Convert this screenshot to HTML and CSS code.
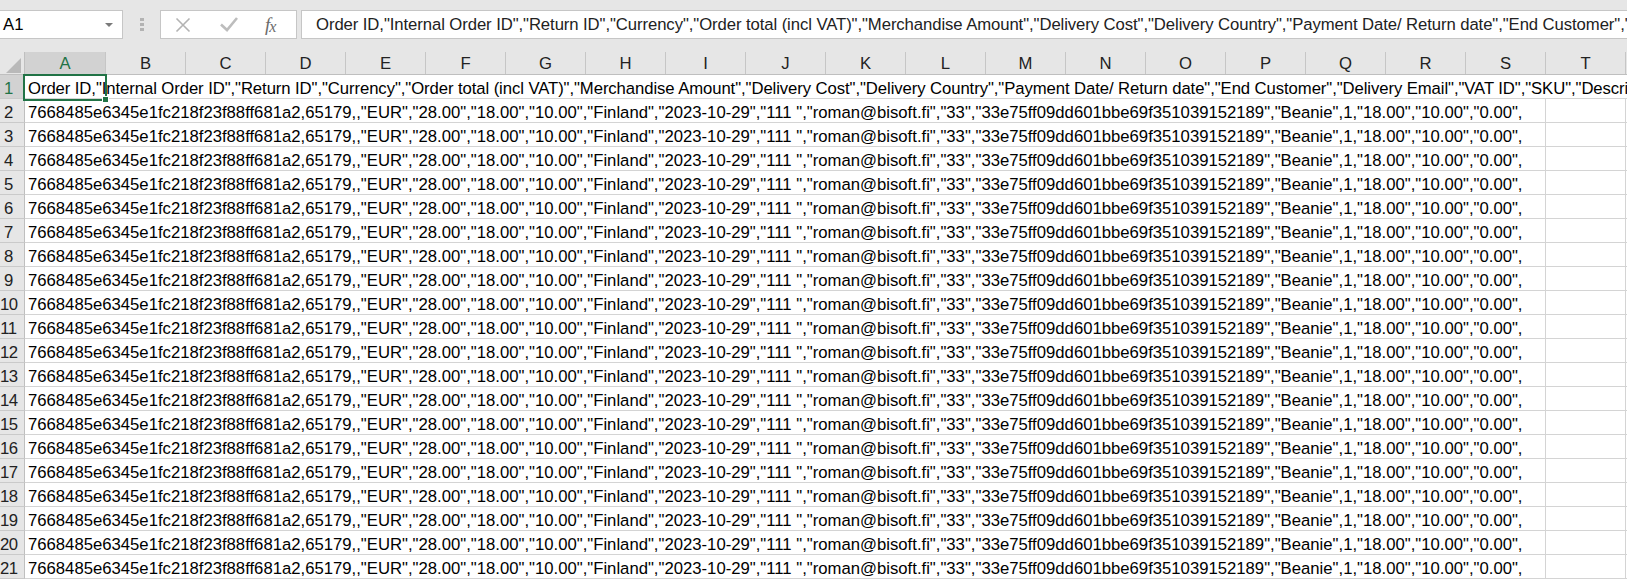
FILE: index.html
```html
<!DOCTYPE html>
<html lang="en">
<head>
    <meta charset="UTF-8">
    <title>Book1 - Excel</title>
    <link rel="stylesheet" href="styles.css">
</head>
<body>
    <div class="formula-row">
        <div class="name-box">
            <span>A1</span>
            <span class="caret"></span>
        </div>
        <div class="grip"><i></i><i></i><i></i></div>
        <div class="fn-box">
            <svg class="fn-cancel" width="16" height="16" viewBox="0 0 16 16">
                <path d="M1.5 1.5 L14.5 14.5 M14.5 1.5 L1.5 14.5" stroke="#b3b3b3" stroke-width="1.6" fill="none"/>
            </svg>
            <svg class="fn-enter" width="18" height="15" viewBox="0 0 18 15">
                <path d="M1 7.5 L7 13 L17 1" stroke="#bdbdbd" stroke-width="2.6" fill="none"/>
            </svg>
            <span class="fn-label">f<span>x</span></span>
        </div>
        <div class="formula-input">Order ID,"Internal Order ID","Return ID","Currency","Order total (incl VAT)","Merchandise Amount","Delivery Cost","Delivery Country","Payment Date/ Return date","End Customer","Delivery Email","VAT ID","SKU","Description"</div>
    </div>

    <div class="sheet" id="sheet">
        <div class="col-heads">
            <div class="corner"><span class="corner-mark"></span></div>
            <div class="col-head first active">A</div>
            <div class="col-head">B</div>
            <div class="col-head">C</div>
            <div class="col-head">D</div>
            <div class="col-head">E</div>
            <div class="col-head">F</div>
            <div class="col-head">G</div>
            <div class="col-head">H</div>
            <div class="col-head">I</div>
            <div class="col-head">J</div>
            <div class="col-head">K</div>
            <div class="col-head">L</div>
            <div class="col-head">M</div>
            <div class="col-head">N</div>
            <div class="col-head">O</div>
            <div class="col-head">P</div>
            <div class="col-head">Q</div>
            <div class="col-head">R</div>
            <div class="col-head">S</div>
            <div class="col-head">T</div>
            <div class="col-head rest"></div>
        </div>

        <div class="row">
            <div class="row-head active">1</div>
            <div class="cell-run wide">Order ID,"Internal Order ID","Return ID","Currency","Order total (incl VAT)","Merchandise Amount","Delivery Cost","Delivery Country","Payment Date/ Return date","End Customer","Delivery Email","VAT ID","SKU","Description","Quantity","Price","Delivery","VAT"</div>
        </div>

        <div class="selection"><span class="handle"></span></div>
    </div>

    <script>
        document.addEventListener('DOMContentLoaded', function() {
            const sheet = document.getElementById('sheet');
            const line = '7668485e6345e1fc218f23f88ff681a2,65179,,"EUR","28.00","18.00","10.00","Finland","2023-10-29","111 ","roman@bisoft.fi","33","33e75ff09dd601bbe69f351039152189","Beanie",1,"18.00","10.00","0.00",';
            const selection = sheet.querySelector('.selection');

            for (let n = 2; n <= 21; n++) {
                const row = document.createElement('div');
                row.className = 'row';
                row.innerHTML =
                    '<div class="row-head">' + n + '</div>' +
                    '<div class="cell-run"></div>' +
                    '<div class="cell"></div>' +
                    '<div class="cell fill"></div>';
                row.querySelector('.cell-run').textContent = line;
                sheet.insertBefore(row, selection);
            }
        });
    </script>
</body>
</html>
```

FILE: styles.css
```css
* {
    box-sizing: border-box;
}

body {
    margin: 0;
    width: 1627px;
    height: 579px;
    overflow: hidden;
    background-color: #e6e6e6;
    font-family: "Liberation Sans", Arial, sans-serif;
    font-size: 16.7px;
    color: #000;
}

/* formula bar */
.formula-row {
    display: flex;
    align-items: flex-start;
    height: 52px;
    padding-top: 10px;
}

.name-box {
    width: 123px;
    height: 29px;
    background: #fff;
    border: 1px solid #c6c6c6;
    border-left: none;
    display: flex;
    align-items: center;
    justify-content: space-between;
    padding: 1px 9px 0 3px;
}

.caret {
    width: 0;
    height: 0;
    border-left: 4px solid transparent;
    border-right: 4px solid transparent;
    border-top: 4px solid #7a7a7a;
}

.grip {
    width: 37px;
    display: flex;
    flex-direction: column;
    align-items: center;
    gap: 2px;
    padding-top: 8px;
}

.grip i {
    display: block;
    width: 4px;
    height: 3px;
    background: #b3b3b3;
}

.fn-box {
    width: 137px;
    height: 29px;
    background: #fff;
    border: 1px solid #c6c6c6;
    display: flex;
    align-items: center;
    padding-left: 14px;
}

.fn-enter {
    margin-left: 29px;
}

.fn-label {
    margin-left: 27px;
    font-family: "Liberation Serif", "Times New Roman", serif;
    font-style: italic;
    font-size: 19px;
    color: #6b6b6b;
    letter-spacing: -1px;
}

.fn-label span {
    font-size: 16px;
    position: relative;
    top: 1px;
}

.formula-input {
    flex: 1;
    margin-left: 4px;
    height: 29px;
    background: #fff;
    border: 1px solid #c6c6c6;
    border-right: none;
    padding: 1px 0 0 14px;
    line-height: 26px;
    white-space: nowrap;
    overflow: hidden;
    color: #222;
    letter-spacing: -0.08px;
}

/* grid */
.sheet {
    position: relative;
}

.col-heads {
    display: flex;
    height: 23px;
    border-bottom: 1px solid #bfbfbf;
}

.corner {
    width: 25px;
    border-right: 1px solid #bfbfbf;
    display: flex;
    align-items: flex-end;
    justify-content: flex-end;
    padding: 0 3px 1px 0;
}

.corner-mark {
    width: 0;
    height: 0;
    border-left: 15px solid transparent;
    border-bottom: 15px solid #b9b9b9;
}

.col-head {
    width: 80px;
    flex-shrink: 0;
    border-right: 1px solid #c6c6c6;
    text-align: center;
    line-height: 22px;
    padding-top: 1px;
    color: #222;
}

.col-head.first {
    width: 81px;
}

.col-head.rest {
    flex: 1;
    border-right: none;
}

.col-head.active,
.row-head.active {
    background: #d2d2d2;
    color: #217346;
}

.row {
    display: flex;
    height: 24px;
}

.row-head {
    width: 25px;
    flex-shrink: 0;
    border-right: 1px solid #bfbfbf;
    border-bottom: 1px solid #cacaca;
    padding: 4px 7px 0 0;
    line-height: 19px;
    text-align: center;
    color: #222;
    letter-spacing: -0.5px;
}

.cell-run,
.cell {
    background: #fff;
    border-bottom: 1px solid #d4d4d4;
    border-right: 1px solid #d4d4d4;
    padding: 4px 0 0 3px;
    line-height: 19px;
    white-space: nowrap;
}

.cell-run {
    width: 1521px;
    flex-shrink: 0;
}

.cell-run.wide {
    flex: 1;
    border-right: none;
    overflow: hidden;
    letter-spacing: -0.08px;
}

.cell {
    width: 80px;
    flex-shrink: 0;
}

.cell.fill {
    flex: 1;
    border-right: none;
}

.selection {
    position: absolute;
    left: 23px;
    top: 22px;
    width: 84px;
    height: 27px;
    border: 2px solid #217346;
}

.handle {
    position: absolute;
    right: -4px;
    bottom: -4px;
    width: 7px;
    height: 7px;
    background: #217346;
    border: 1px solid #fff;
}
```
